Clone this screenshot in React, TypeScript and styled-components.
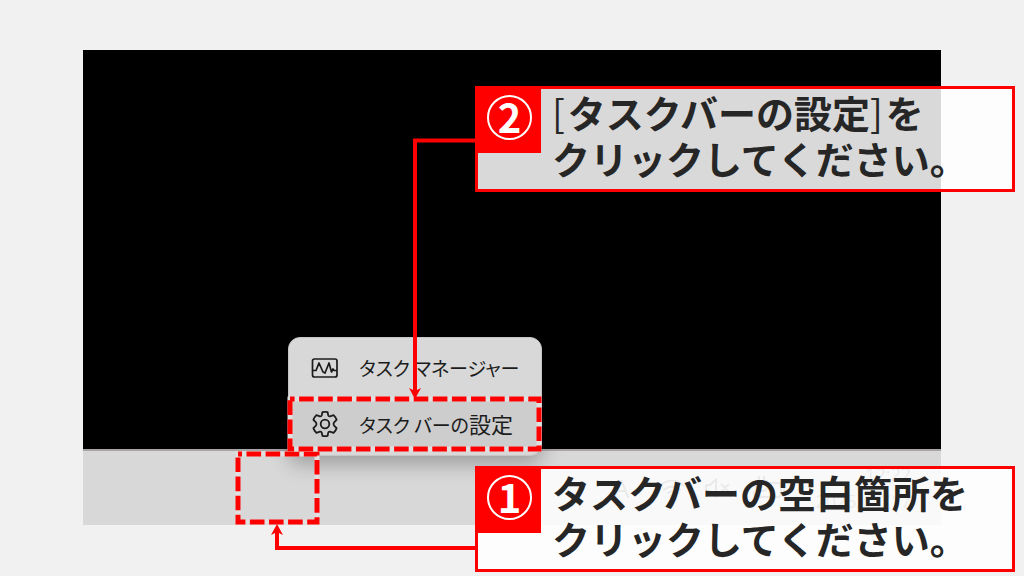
import React from "react";
import styled, { createGlobalStyle } from "styled-components";

const RED = "#ff0000";
const JP = `"Noto Sans CJK JP", "Noto Sans", sans-serif`;

const GlobalStyle = createGlobalStyle`
  * { box-sizing: border-box; }
  body { margin: 0; background: #f1f1f1; font-family: ${JP}; }
`;

const Slide = styled.main`
  position: relative;
  min-height: 576px;
  padding: 50px 83px;
  background: #f1f1f1;
  overflow: hidden;
`;

const Screen = styled.section`
  display: flex;
  flex-direction: column;
`;

const Desktop = styled.div`
  height: 399px;
  background: #000;
`;

const Taskbar = styled.footer`
  display: flex;
  align-items: center;
  justify-content: flex-end;
  gap: 20px;
  height: 76px;
  padding-right: 30px;
  border-top: 2px solid #a9a5a7;
  background: #d8d8d8;
  color: #707070;
`;

const TrayLetter = styled.span`
  padding-right: 10px;
  font: 26px/28px "Open Sans", sans-serif;
`;

const Clock = styled.time`
  display: flex;
  flex-direction: column;
  align-items: flex-end;
  padding-left: 10px;
  font: 18px/27px "Open Sans", sans-serif;
`;

const Menu = styled.nav`
  position: absolute;
  left: 288px;
  top: 337px;
  width: 254px;
  display: flex;
  flex-direction: column;
  padding-bottom: 4px;
  border-radius: 12px;
  border: 1px solid #c6c6c6;
  background: #d8d8d8;
  box-shadow: 0 8px 20px rgba(0, 0, 0, 0.28);
  overflow: hidden;
`;

const MenuItem = styled.button<{ $active?: boolean }>`
  display: flex;
  align-items: center;
  gap: 20px;
  height: ${(p) => (p.$active ? 54 : 59)}px;
  padding: 0 0 0 22px;
  border: 0;
  background: ${(p) => (p.$active ? "#cdcdcd" : "transparent")};
  color: #1c1c1c;
  font-family: ${JP};
  font-size: 19px;
  line-height: 28px;
  font-feature-settings: "palt";
  white-space: nowrap;

  svg { flex: none; }
`;

const Kanji = styled.span`
  font-size: 22px;
`;

const Overlay = styled.svg<{ $x: number; $y: number }>`
  position: absolute;
  left: ${(p) => p.$x}px;
  top: ${(p) => p.$y}px;
  overflow: visible;
  pointer-events: none;
`;

const Callout = styled.section<{ $y: number }>`
  position: absolute;
  left: 475px;
  top: ${(p) => p.$y}px;
  width: 540px;
  display: flex;
  align-items: flex-start;
  gap: 11px;
  height: 106px;
  border: 3px solid ${RED};
  background: rgba(255, 255, 255, 0.85);
`;

const Badge = styled.div`
  display: flex;
  justify-content: center;
  width: 63px;
  height: 64px;
  padding-top: 6px;
  background: ${RED};
`;

const Ring = styled.span`
  display: flex;
  align-items: center;
  justify-content: center;
  width: 45px;
  height: 45px;
  padding-bottom: 4px;
  border: 2px solid #fff;
  border-radius: 50%;
  color: #fff;
  font: 700 40px/36px ${JP};
`;

const Message = styled.p`
  margin: 0;
  color: #262626;
  font: 700 38px/46px ${JP};
  white-space: nowrap;
`;

const Bracket = styled.span`
  padding-right: 3px;
  font-weight: 400;
`;

function Wifi() {
  return (
    <svg width="26" height="24" viewBox="0 0 30 26" fill="none" stroke="currentColor" strokeWidth="2.200" strokeLinecap="round" aria-hidden="true">
      <path d="M2 10a18 18 0 0 1 26 0M6 15a13 13 0 0 1 18 0M10 19a7 7 0 0 1 10 0" />
      <circle cx="15" cy="23" r="1.5" />
    </svg>
  );
}

function Muted() {
  return (
    <svg width="26" height="22" viewBox="0 0 26 22" fill="none" stroke="currentColor" strokeWidth="2" strokeLinejoin="round" aria-hidden="true">
      <path d="M1 8h4l6-6v18l-6-6H1zM16 7l8 8M24 7l-8 8" />
    </svg>
  );
}

function Battery() {
  return (
    <svg width="34" height="26" viewBox="0 0 34 26" fill="none" stroke="currentColor" strokeWidth="2" strokeLinejoin="round" aria-hidden="true">
      <path d="M18 8h9q3 0 3 3v8q0 3-3 3H6q-3 0-3-3v-3M30 12h3v6h-3" />
      <path d="M5 6h11v5q0 5-5.500 5T5 11zM8 6V1M13 6V1" />
    </svg>
  );
}

function Monitor() {
  return (
    <svg width="28" height="22" viewBox="0 0 28 22" fill="none" stroke="currentColor" strokeWidth="1.700" strokeLinejoin="round" aria-hidden="true">
      <rect x="1.500" y="2" width="24.500" height="18" rx="2" />
      <path d="M2 13.500H5L8 6L12 15L14 16L18 6L20.500 15L22 12L23 13.500H26" />
    </svg>
  );
}

function Gear() {
  return (
    <svg width="28" height="28" viewBox="0 0 28 28" fill="none" stroke="currentColor" strokeWidth="1.800" strokeLinejoin="round" aria-hidden="true">
      <path d="M11.400 2.100Q14 1.500 16.600 2.100L17.200 5.200Q17.600 6.600 19 6.300L22.600 5.100Q24.700 7.100 25.600 9.900L23.100 12.300Q21.900 14 23.100 15.700L25.600 18.100Q24.700 20.900 22.600 22.900L19 21.700Q17.600 21.400 17.200 22.800L16.600 25.900Q14 26.500 11.400 25.900L10.800 22.800Q10.400 21.400 9 21.700L5.400 22.900Q3.300 20.900 2.400 18.100L4.900 15.700Q6.100 14 4.900 12.300L2.400 9.900Q3.300 7.100 5.400 5.100L9 6.300Q10.400 6.600 10.800 5.200Z" />
      <circle cx="14" cy="14" r="4.300" />
    </svg>
  );
}

function DashedFrame({ x, y, w, h, offset }: { x: number; y: number; w: number; h: number; offset: number }) {
  return (
    <Overlay $x={x} $y={y} width={w} height={h} aria-hidden="true">
      <path d={`M0 0H${w}V${h}H0Z`} fill="none" stroke="#e0e0e0" strokeWidth="5" />
      <path
        d={`M0 0H${w}V${h}H0Z`}
        fill="none"
        stroke={RED}
        strokeWidth="5"
        strokeDasharray="14.600 4.500"
        strokeDashoffset={offset}
      />
    </Overlay>
  );
}

export default function App() {
  return (
    <>
      <GlobalStyle />
      <Slide>
        <Screen>
          <Desktop />
          <Taskbar>
            <TrayLetter>A</TrayLetter>
            <Wifi />
            <Muted />
            <Battery />
            <Clock>
              <span>12:22</span>
              <span>2025/11/17</span>
            </Clock>
          </Taskbar>
        </Screen>

        <Menu>
          <MenuItem type="button">
            <Monitor />
            <span>タスク マネージャー</span>
          </MenuItem>
          <MenuItem type="button" $active>
            <Gear />
            <span>
              タスク バーの<Kanji>設定</Kanji>
            </span>
          </MenuItem>
        </Menu>

        <DashedFrame x={238} y={454} w={79} h={68} offset={10.6} />
        <DashedFrame x={290} y={399} w={249} h={50} offset={10} />

        <Overlay $x={405} $y={136} width="72" height="264" aria-hidden="true">
          <path d="M70 4.500H10V256" fill="none" stroke={RED} strokeWidth="4" />
          <path d="M10 263L4 252L10 255L16 252Z" fill={RED} />
        </Overlay>
        <Overlay $x={267} $y={523} width="210" height="30" aria-hidden="true">
          <path d="M209 25H10V6" fill="none" stroke={RED} strokeWidth="4" />
          <path d="M10 1L4 12L10 9L16 12Z" fill={RED} />
        </Overlay>

        <Callout $y={86}>
          <Badge>
            <Ring>2</Ring>
          </Badge>
          <Message>
            <Bracket>[</Bracket>タスクバーの設定<Bracket>]</Bracket>を
            <br />
            クリックしてください。
          </Message>
        </Callout>
        <Callout $y={466}>
          <Badge>
            <Ring>1</Ring>
          </Badge>
          <Message>
            タスクバーの空白箇所を
            <br />
            クリックしてください。
          </Message>
        </Callout>
      </Slide>
    </>
  );
}
